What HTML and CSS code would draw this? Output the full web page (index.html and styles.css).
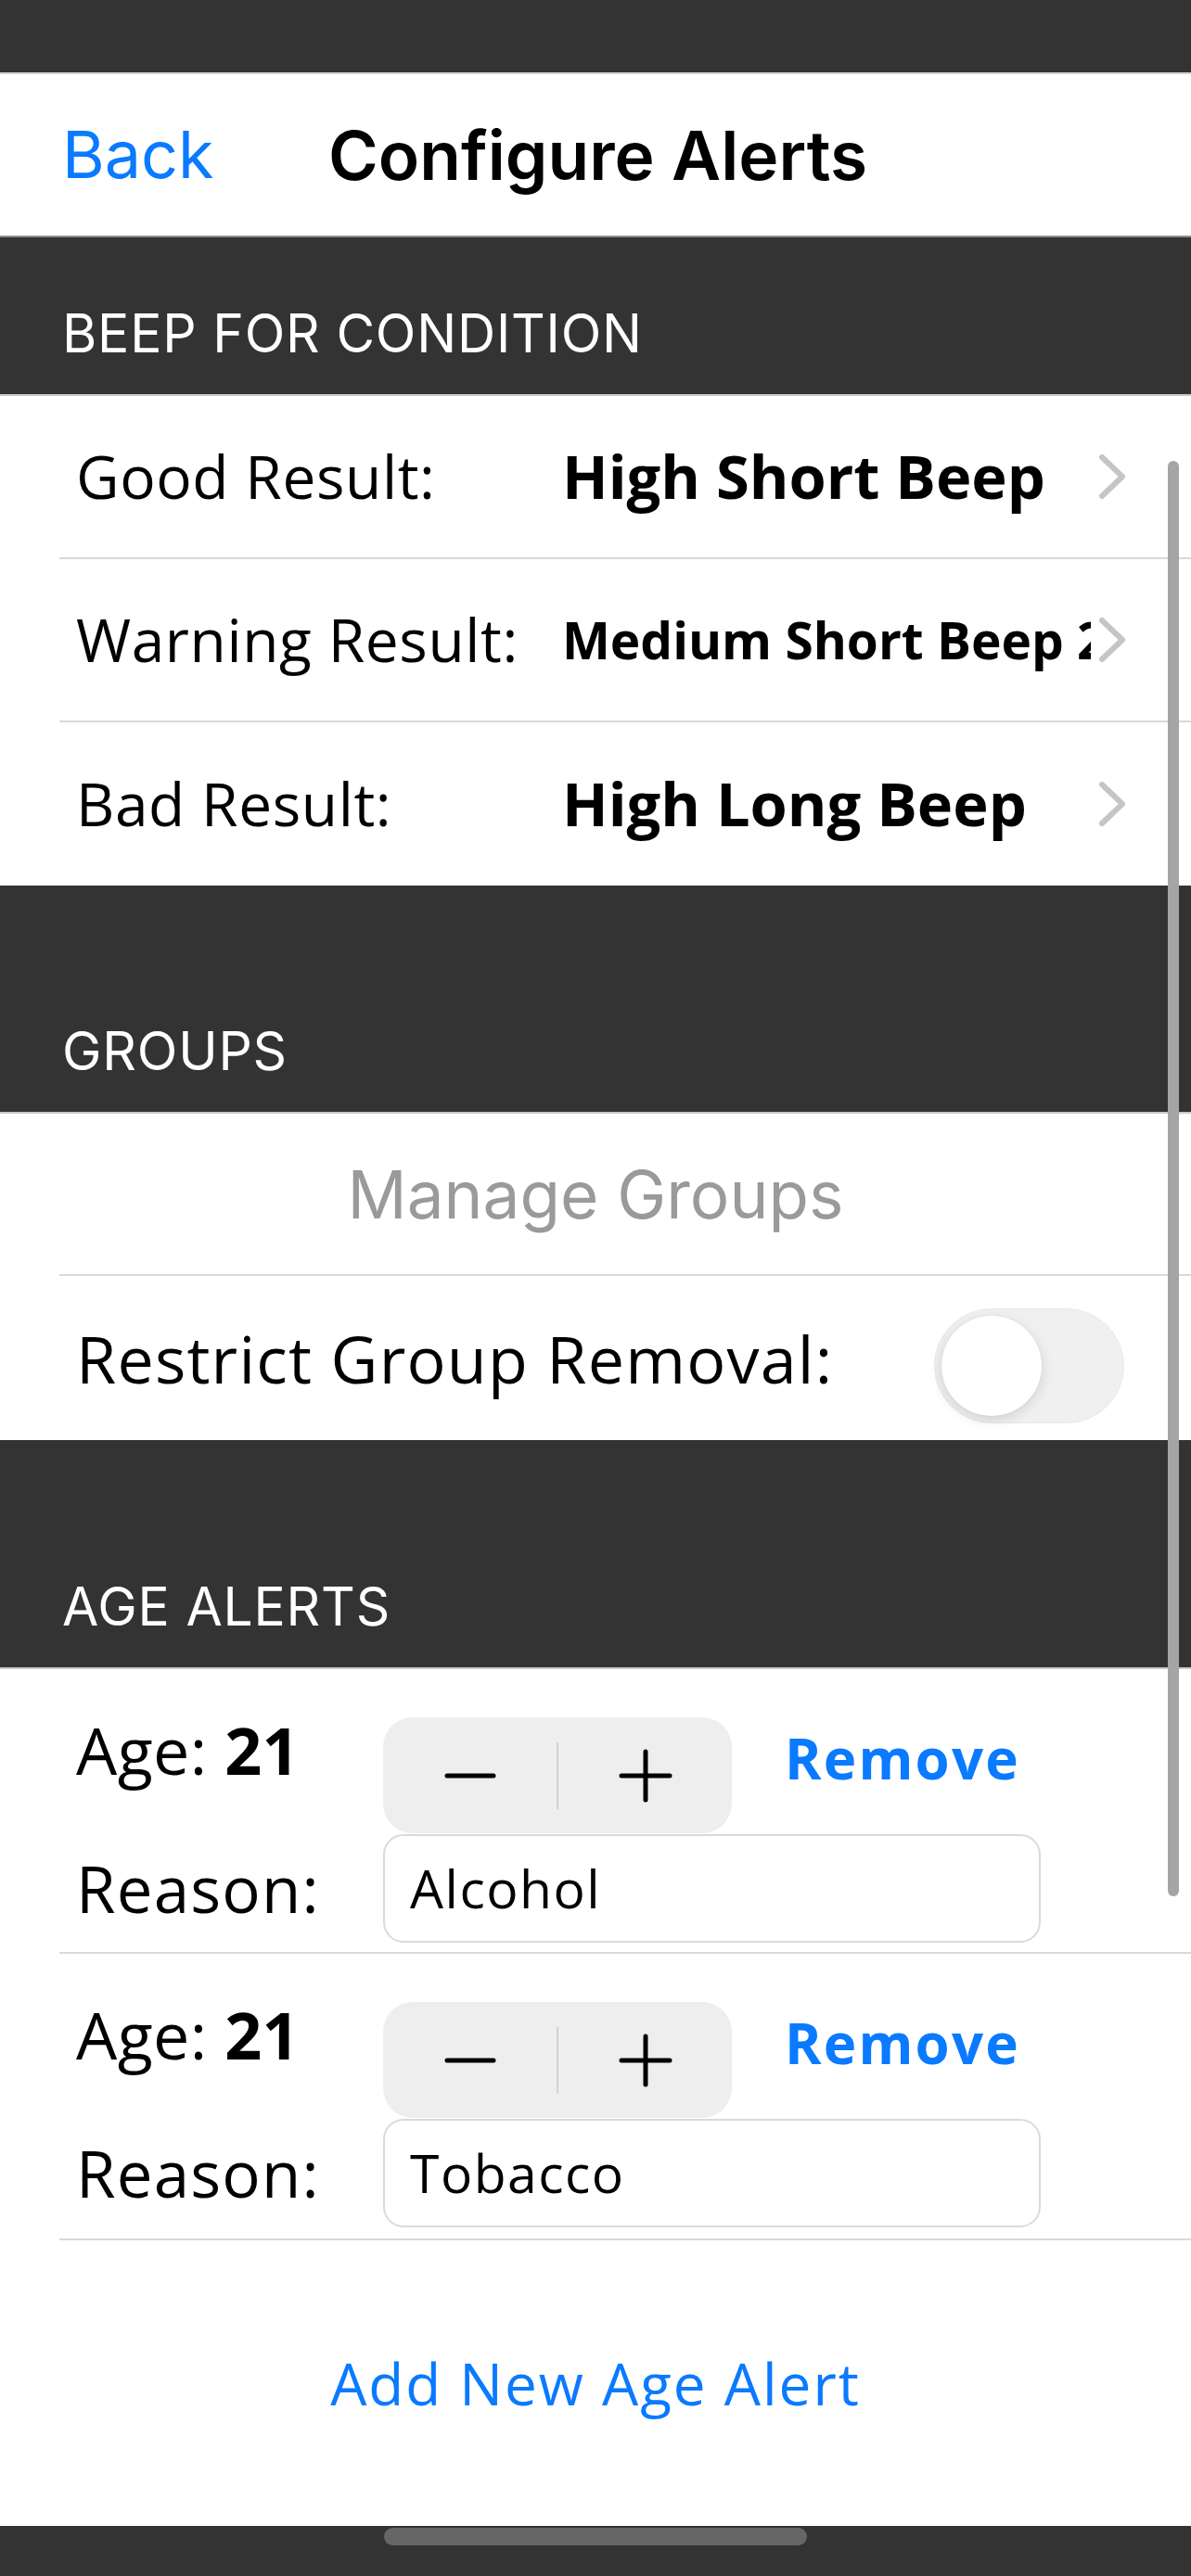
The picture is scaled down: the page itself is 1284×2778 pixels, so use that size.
FILE: index.html
```html
<!DOCTYPE html>
<html lang="en">
<head>
<meta charset="utf-8">
<title>Configure Alerts</title>
<link rel="stylesheet" href="styles.css">
</head>
<body>
<div class="screen">
  <div class="statusbar"></div>

  <header class="navbar">
    <a class="back">Back</a>
    <h1 class="title">Configure Alerts</h1>
  </header>

  <div class="section-head head-1">BEEP FOR CONDITION</div>
  <div class="group">
    <div class="beep-row">
      <span class="label">Good Result:</span>
      <span class="value">High Short Beep</span>
      <svg class="chev" viewBox="0 0 32 52" width="32" height="52"><polyline points="5,5 27,26 5,47" fill="none" stroke="#c5c5c8" stroke-width="6" stroke-linecap="round" stroke-linejoin="round"/></svg>
    </div>
    <div class="beep-row">
      <span class="label">Warning Result:</span>
      <span class="value value-small">Medium Short Beep 2</span>
      <svg class="chev" viewBox="0 0 32 52" width="32" height="52"><polyline points="5,5 27,26 5,47" fill="none" stroke="#c5c5c8" stroke-width="6" stroke-linecap="round" stroke-linejoin="round"/></svg>
    </div>
    <div class="beep-row last">
      <span class="label">Bad Result:</span>
      <span class="value">High Long Beep</span>
      <svg class="chev" viewBox="0 0 32 52" width="32" height="52"><polyline points="5,5 27,26 5,47" fill="none" stroke="#c5c5c8" stroke-width="6" stroke-linecap="round" stroke-linejoin="round"/></svg>
    </div>
  </div>

  <div class="section-head head-2">GROUPS</div>
  <div class="group">
    <div class="manage-row">Manage Groups</div>
    <div class="toggle-row">
      <span class="label label-large">Restrict Group Removal:</span>
      <div class="toggle"><div class="knob"></div></div>
    </div>
  </div>

  <div class="section-head head-3">AGE ALERTS</div>
  <div class="group">
    <div class="alert">
      <div class="age">Age: <b>21</b></div>
      <div class="stepper">
        <svg viewBox="0 0 56 56" width="56" height="56"><line x1="3" y1="28" x2="53" y2="28" stroke="#000" stroke-width="5" stroke-linecap="round"/></svg>
        <span class="step-div"></span>
        <svg viewBox="0 0 58 58" width="58" height="58"><line x1="3" y1="29" x2="55" y2="29" stroke="#000" stroke-width="5" stroke-linecap="round"/><line x1="29" y1="3" x2="29" y2="55" stroke="#000" stroke-width="5" stroke-linecap="round"/></svg>
      </div>
      <a class="remove">Remove</a>
      <div class="reason">Reason:</div>
      <div class="field">Alcohol</div>
    </div>
    <div class="alert alert-2">
      <div class="age">Age: <b>21</b></div>
      <div class="stepper">
        <svg viewBox="0 0 56 56" width="56" height="56"><line x1="3" y1="28" x2="53" y2="28" stroke="#000" stroke-width="5" stroke-linecap="round"/></svg>
        <span class="step-div"></span>
        <svg viewBox="0 0 58 58" width="58" height="58"><line x1="3" y1="29" x2="55" y2="29" stroke="#000" stroke-width="5" stroke-linecap="round"/><line x1="29" y1="3" x2="29" y2="55" stroke="#000" stroke-width="5" stroke-linecap="round"/></svg>
      </div>
      <a class="remove">Remove</a>
      <div class="reason">Reason:</div>
      <div class="field">Tobacco</div>
    </div>
    <div class="add-row">Add New Age Alert</div>
  </div>

  <div class="bottombar"><div class="home-indicator"></div></div>

  <div class="scrollbar"></div>
</div>
</body>
</html>
```

FILE: styles.css
```css
* {
  box-sizing: border-box;
  margin: 0;
  padding: 0;
}

html,
body {
  background: #333333;
}

body {
  margin: 0;
  width: 1284px;
  height: 2778px;
  overflow: hidden;
  font-family: "Open Sans", "Noto Sans", sans-serif;
  color: #000;
}

.screen {
  position: relative;
  width: 1284px;
  height: 2778px;
  background: #333333;
}

.statusbar {
  height: 80px;
  background: #333333;
  border-bottom: 2px solid #d2d2d2;
}

.navbar {
  height: 176px;
  background: #ffffff;
  display: grid;
  grid-template-columns: 287px auto;
  align-items: center;
  padding-left: 67px;
  border-bottom: 2px solid #8f8f8f;
  font-family: Inter, "Liberation Sans", sans-serif;
}

.back {
  color: #0a7aff;
  font-size: 70px;
  line-height: 1;
}

.title {
  font-size: 73px;
  font-weight: 600;
  line-height: 1;
  color: #000;
  letter-spacing: 0px;
}

.section-head {
  background: #333333;
  color: #ffffff;
  font-family: Inter, "Liberation Sans", sans-serif;
  font-size: 57px;
  letter-spacing: 0.8px;
  line-height: 60px;
  padding: 0 0 35px 67px;
  display: flex;
  align-items: flex-end;
  border-bottom: 2px solid #c9c9c9;
}

.head-1 { height: 171px; }
.head-2 { height: 246px; }
.head-3 { height: 247px; }

.group {
  background: #ffffff;
}

.beep-row {
  margin-left: 64px;
  padding-left: 18px;
  height: 176px;
  display: grid;
  grid-template-columns: 524px 570px 39px;
  align-items: center;
  border-bottom: 2px solid #d9d9d9;
}

.beep-row.last {
  border-bottom: none;
}

.label {
  font-size: 64px;
  letter-spacing: 0.6px;
  line-height: 1;
  white-space: nowrap;
}

.label-large {
  font-size: 70px;
  letter-spacing: 1.2px;
}

.value {
  font-size: 65px;
  font-weight: 700;
  line-height: 1.5;
  white-space: nowrap;
  overflow: hidden;
}

.value-small {
  font-size: 55px;
}

.chev {
  display: block;
  justify-self: end;
}

.manage-row {
  height: 175px;
  margin-left: 64px;
  padding-right: 64px;
  display: flex;
  align-items: center;
  justify-content: center;
  font-family: Inter, "Liberation Sans", sans-serif;
  font-size: 71px;
  color: #9a9a9a;
  border-bottom: 2px solid #d9d9d9;
}

.toggle-row {
  height: 177px;
  margin-left: 64px;
  padding-left: 18px;
  padding-right: 72px;
  display: flex;
  align-items: center;
  justify-content: space-between;
}

.toggle {
  width: 205px;
  height: 124px;
  margin-top: 16px;
  border-radius: 62px;
  background: #f0f0f0;
  border: 1px solid #e9e9e9;
  display: flex;
  align-items: center;
  padding: 0 7px;
}

.knob {
  width: 108px;
  height: 108px;
  border-radius: 50%;
  background: #ffffff;
  box-shadow: 0 4px 14px rgba(0, 0, 0, 0.13), 0 0 2px rgba(0, 0, 0, 0.06);
}

.alert {
  margin-left: 64px;
  padding: 52px 0 0 18px;
  height: 307px;
  display: grid;
  grid-template-columns: 331px 376px auto;
  grid-template-rows: 126px 117px;
  border-bottom: 2px solid #d9d9d9;
}

.alert-2 {
  height: 309px;
}

.age {
  align-self: start;
  font-size: 70px;
  letter-spacing: 0.4px;
  line-height: 1;
  white-space: nowrap;
}

.age b {
  font-weight: 700;
}

.stepper {
  width: 376px;
  height: 125px;
  border-radius: 32px;
  background: #eeeeef;
  display: grid;
  grid-template-columns: 1fr 2px 1fr;
  align-items: center;
  justify-items: center;
}

.stepper svg {
  display: block;
}

.step-div {
  width: 2px;
  height: 72px;
  background: #d2d2d4;
}

.remove {
  align-self: start;
  margin-top: 14px;
  margin-left: 57px;
  font-size: 60px;
  font-weight: 700;
  letter-spacing: 2.2px;
  line-height: 1;
  color: #0a7aff;
}

.reason {
  align-self: center;
  font-size: 69px;
  letter-spacing: 1.2px;
  line-height: 1;
}

.field {
  grid-column: 2 / 4;
  width: 709px;
  height: 117px;
  border: 2px solid #dadada;
  border-radius: 22px;
  padding-left: 27px;
  display: flex;
  align-items: center;
  font-size: 57px;
  letter-spacing: 1.5px;
  line-height: 1;
}

.add-row {
  height: 308px;
  display: flex;
  align-items: center;
  justify-content: center;
  font-size: 62px;
  letter-spacing: 2px;
  color: #0a7aff;
}

.bottombar {
  height: 54px;
  background: #333333;
  display: flex;
  justify-content: center;
  padding-top: 2px;
}

.home-indicator {
  width: 456px;
  height: 19px;
  border-radius: 10px;
  background: #666666;
}

.scrollbar {
  position: absolute;
  left: 1259px;
  top: 497px;
  width: 12px;
  height: 1548px;
  border-radius: 6px;
  background: #a5a5a5;
}
```
